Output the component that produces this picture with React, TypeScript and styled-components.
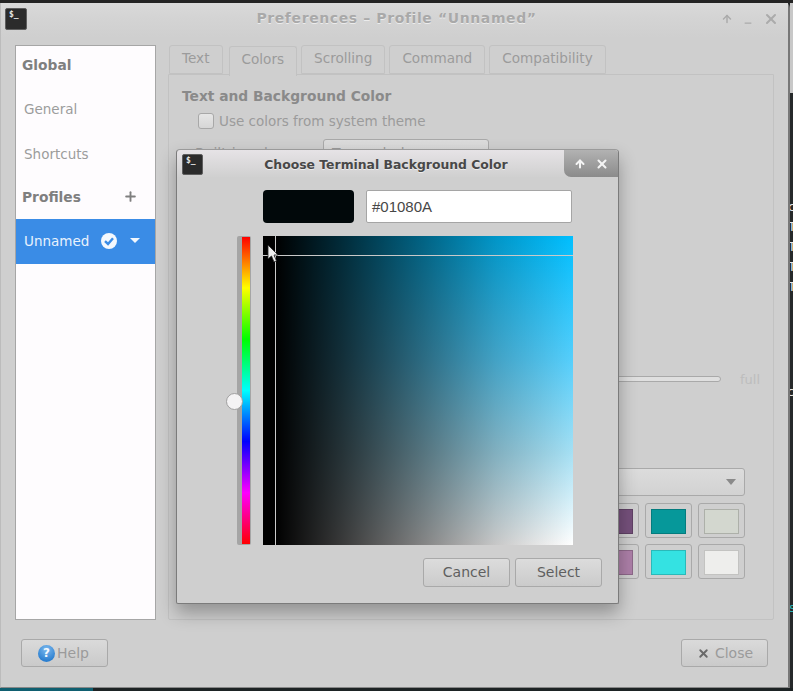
import React from "react";
import styled, { createGlobalStyle } from "styled-components";
import { LuArrowUp, LuMinus, LuPlus, LuX } from "react-icons/lu";

const GlobalStyle = createGlobalStyle`
  html, body {
    margin: 0;
    padding: 0;
    background: #26292a;
    overflow: hidden;
  }
  * {
    box-sizing: border-box;
  }
`;

const Page = styled.div`
  position: relative;
  width: 793px;
  height: 691px;
  display: flex;
  flex-direction: column;
  background: #26292a;
  font-family: "DejaVu Sans", sans-serif;
  font-size: 14px;
  overflow: hidden;
`;

const TopEdge = styled.div`
  height: 3px;
  flex: none;
  background: #242424;
`;

const Middle = styled.div`
  display: flex;
  height: 685px;
  flex: none;
`;

const BottomEdge = styled.div`
  height: 3px;
  flex: none;
  background: #1d2324;
`;

const TealBar = styled.div`
  width: 93px;
  height: 100%;
  background: #0f5f70;
`;

const BehindStrip = styled.div`
  flex: 1;
  display: flex;
  flex-direction: column;
  overflow: hidden;
  color: #e8e8e8;
  font-size: 13px;
  line-height: 20px;
`;

const BehindTop = styled.div`
  height: 90px;
  flex: none;
  background: #c8c8c8;
`;

const BehindLines = styled.div`
  margin-top: 104px;
  margin-left: -2px;
`;

const BehindLast = styled.div`
  margin-top: 85px;
  margin-left: -3px;
`;

const BehindTeal = styled.div`
  margin-top: 196px;
  margin-left: -1px;
  color: #2bb5b5;
`;

const Window = styled.div`
  width: 790px;
  flex: none;
  display: flex;
  flex-direction: column;
  background: #cfcfcf;
  border-right: 2px solid #777;
  border-bottom: 1px solid #888;
  border-left: 1px solid #bcbcbc;
  border-top-right-radius: 5px;
`;

const TitleBar = styled.div`
  position: relative;
  height: 35px;
  flex: none;
  display: flex;
  align-items: center;
  justify-content: space-between;
  padding: 0 9px 4px 4px;
  background: linear-gradient(#dadada, #d4d4d4 40%, #cfcfcf);
`;

const TermIcon = styled.div<{ $size: number }>`
  width: ${(p) => p.$size}px;
  height: ${(p) => p.$size}px;
  flex: none;
  padding: 1px 0 0 3px;
  background: #2b2b2b;
  border: 1px solid #5e5e5e;
  border-radius: 2px;
  color: #e6e6e6;
  font-family: "DejaVu Sans Mono", monospace;
  font-size: 8px;
  font-weight: bold;
  line-height: 10px;
`;

const TitleText = styled.div`
  position: absolute;
  left: 0;
  right: 0;
  top: 7px;
  text-align: center;
  padding-left: 4px;
  color: #a9a9a9;
  font-size: 14px;
  font-weight: bold;
  letter-spacing: 0.6px;
  text-shadow: 0 1px 0 #ececec;
`;

const WindowButtons = styled.div`
  display: flex;
  align-items: center;
  gap: 10px;
  color: #ababab;
  z-index: 1;
`;

const MinimizeMark = styled(LuMinus)`
  margin-top: 8px;
`;

const Body = styled.div`
  flex: 1;
  display: flex;
  gap: 12px;
  padding: 7px 14px 0 14px;
`;

const Sidebar = styled.div`
  width: 141px;
  height: 575px;
  flex: none;
  background: #fefcfe;
  border: 1px solid #a6a6a6;
`;

const SideRow = styled.div<{ $h: number }>`
  height: ${(p) => p.$h}px;
  display: flex;
  align-items: center;
  padding: 0 17px 0 8px;
  color: #9c9c9c;
  font-size: 13.5px;
`;

const SideHeading = styled(SideRow)`
  justify-content: space-between;
  padding-left: 6px;
  padding-bottom: 2px;
  color: #7f7f7f;
  font-size: 13.8px;
  font-weight: bold;
`;

const SideActive = styled(SideRow)`
  background: #3a8ce6;
  color: #e8f2fd;
  padding-right: 15px;
  padding-bottom: 2px;
`;

const ActiveName = styled.span`
  flex: 1;
`;

const CheckBadge = styled.svg`
  width: 16px;
  height: 16px;
  margin-right: 13px;
`;

const CaretDown = styled.span`
  width: 0;
  height: 0;
  border-left: 5px solid transparent;
  border-right: 5px solid transparent;
  border-top: 5px solid #f2f7fd;
`;

const Notebook = styled.div`
  flex: 1;
  display: flex;
  flex-direction: column;
  height: 575px;
`;

const TabRow = styled.div`
  height: 30px;
  flex: none;
  display: flex;
  gap: 4px;
  padding-left: 1px;
  position: relative;
  z-index: 1;
`;

const Tab = styled.div<{ $active?: boolean }>`
  height: ${(p) => (p.$active ? 30 : 29)}px;
  margin-top: ${(p) => (p.$active ? 1 : 0)}px;
  margin-left: ${(p) => (p.$active ? 2 : 0)}px;
  padding: 0 12px ${(p) => (p.$active ? "5px" : "4px")};
  display: flex;
  align-items: center;
  color: #9b9b9b;
  background: #cfcfcf;
  border: 1px solid #c2c2c2;
  border-bottom: ${(p) => (p.$active ? "0" : "1px solid #c2c2c2")};
  border-radius: 3px 3px 0 0;
  font-size: 13.6px;
`;

const Panel = styled.div`
  flex: 1;
  margin-top: -1px;
  display: flex;
  flex-direction: column;
  padding: 11px 13px 0 13px;
  border: 1px solid #c2c2c2;
  border-radius: 0 0 2px 2px;
`;

const SectionTitle = styled.div`
  height: 20px;
  line-height: 20px;
  color: #8a8a8a;
  font-size: 13.8px;
  font-weight: bold;
`;

const CheckRow = styled.div`
  margin-top: 7px;
  margin-left: 16px;
  height: 16px;
  display: flex;
  align-items: center;
  gap: 5px;
  color: #9b9b9b;
  font-size: 13.5px;
`;

const CheckBox = styled.span`
  width: 16px;
  height: 16px;
  background: linear-gradient(#e6e6e6, #d6d6d6);
  border: 1px solid #a8a8a8;
  border-radius: 3px;
`;

const SchemeRow = styled.div`
  margin-top: 10px;
  margin-left: 13px;
  display: flex;
  align-items: center;
  color: #9b9b9b;
`;

const SchemeLabel = styled.div`
  width: 128px;
`;

const Combo = styled.div<{ $w?: number }>`
  width: ${(p) => (p.$w ? `${p.$w}px` : "auto")};
  height: 28px;
  display: flex;
  align-items: center;
  justify-content: space-between;
  padding: 0 8px;
  color: #9b9b9b;
  background: linear-gradient(#dcdcdc, #d2d2d2);
  border: 1px solid #a9a9a9;
  border-radius: 3px;
`;

const ComboCaret = styled.span`
  width: 0;
  height: 0;
  border-left: 5px solid transparent;
  border-right: 5px solid transparent;
  border-top: 6px solid #8a8a8a;
`;

const SliderRow = styled.div`
  margin-top: 202px;
  height: 20px;
  display: flex;
  align-items: center;
  justify-content: flex-end;
  gap: 19px;
  color: #bdbdbd;
  font-size: 13px;
`;

const SliderTrack = styled.div`
  width: 300px;
  height: 6px;
  background: #dfdfdf;
  border: 1px solid #a9a9a9;
  border-radius: 3px;
`;

const PaletteBlock = styled.div`
  margin-top: 79px;
  margin-right: 15px;
  display: flex;
  flex-direction: column;
  gap: 7px;
  align-self: flex-end;
  width: 418px;
`;

const SwatchGrid = styled.div`
  display: grid;
  grid-template-columns: repeat(8, 47px);
  grid-auto-rows: 35px;
  gap: 6px;
`;

const Swatch = styled.div<{ $color: string }>`
  padding: 5px;
  background: #cfcfcf;
  border: 1px solid #a9a9a9;
  border-radius: 3px;

  &::after {
    content: "";
    display: block;
    height: 100%;
    background: ${(p) => p.$color};
    border: 1px solid rgba(0, 0, 0, 0.18);
  }
`;

const Footer = styled.div`
  height: 67px;
  flex: none;
  display: flex;
  align-items: flex-start;
  justify-content: space-between;
  padding: 19px 20px 0;
`;

const PushButton = styled.div<{ $h?: number }>`
  width: 87px;
  height: ${(p) => p.$h ?? 28}px;
  display: flex;
  align-items: center;
  justify-content: center;
  color: #9b9b9b;
  background: linear-gradient(#dadada, #cacaca);
  border: 1px solid #a9a9a9;
  border-radius: 3px;
  font-size: 14px;
`;

const HelpButton = styled(PushButton)`
  gap: 2px;
  padding-right: 2px;
`;

const HelpIcon = styled.span`
  width: 17px;
  height: 17px;
  display: flex;
  align-items: center;
  justify-content: center;
  border-radius: 50%;
  background: radial-gradient(circle at 50% 25%, #7cb9ee, #2b7fd0 75%);
  color: #f4f9fe;
  font-size: 12px;
  font-weight: bold;
`;

const CloseButton = styled(PushButton)`
  gap: 5px;
  padding-left: 1px;
`;

const Dialog = styled.div`
  position: absolute;
  left: 176px;
  top: 149px;
  width: 443px;
  height: 455px;
  display: flex;
  flex-direction: column;
  background: #cfcfcf;
  border: 1px solid #7b7b7b;
  border-top-color: #9a9a9a;
  border-radius: 4px 4px 2px 2px;
  box-shadow: 0 9px 18px rgba(0, 0, 0, 0.3);
`;

const DialogTitle = styled.div`
  position: relative;
  height: 27px;
  flex: none;
  display: flex;
  align-items: center;
  justify-content: space-between;
  padding-left: 5px;
  padding-top: 2px;
  background: linear-gradient(#e6e3e6, #d0d0d0);
  border-radius: 4px 4px 0 0;
`;

const DialogTitleText = styled.div`
  position: absolute;
  left: 0;
  right: 0;
  top: 7px;
  padding-left: 3px;
  padding-right: 26px;
  text-align: center;
  color: #484848;
  font-size: 12.4px;
  font-weight: bold;
  text-shadow: 0 1px 0 #ededed;
`;

const DialogButtons = styled.div`
  width: 54px;
  height: 27px;
  margin-top: -2px;
  display: flex;
  align-items: center;
  justify-content: center;
  gap: 9px;
  color: #f4f4f4;
  background: linear-gradient(#b2b2b2, #8b8b8b);
  border-radius: 0 3px 0 7px;
  z-index: 1;
`;

const ColorRow = styled.div`
  margin-top: 13px;
  margin-left: 86px;
  display: flex;
  gap: 12px;
`;

const ColorPreview = styled.div`
  width: 91px;
  height: 33px;
  background: #01080a;
  border-radius: 4px;
`;

const HexEntry = styled.div`
  width: 206px;
  height: 33px;
  display: flex;
  align-items: center;
  padding-left: 5px;
  background: #fff;
  border: 1px solid #a5a5a5;
  border-radius: 2px;
  color: #474747;
  font-family: "Liberation Sans", sans-serif;
  font-size: 15px;
`;

const PickerRow = styled.div`
  margin-top: 13px;
  margin-left: 60px;
  display: flex;
  gap: 12px;
`;

const HueTrough = styled.div`
  position: relative;
  width: 14px;
  height: 309px;
  padding: 1px 1px 1px 5px;
  background: #a5a5a5;
  border-radius: 2px;
`;

const HueStrip = styled.div`
  height: 100%;
  background: linear-gradient(
    #ff0000,
    #ffff00 16.6%,
    #00ff00 33.3%,
    #00ffff 50%,
    #0000ff 66.6%,
    #ff00ff 83.3%,
    #ff0000
  );
`;

const HueKnob = styled.div`
  position: absolute;
  left: -11px;
  top: 157px;
  width: 17px;
  height: 17px;
  border-radius: 50%;
  background: #f4f3f4;
  border: 1px solid #a0a0a0;
`;

const SvSquare = styled.div`
  position: relative;
  width: 310px;
  height: 309px;
  background: linear-gradient(
      to right,
      #000,
      #000 4%,
      rgba(0, 0, 0, 0.78) 25%,
      rgba(0, 0, 0, 0.5) 50%,
      rgba(0, 0, 0, 0.22) 75%,
      rgba(0, 0, 0, 0)
    ),
    linear-gradient(#00bfff, #55cffc 40%, #a5e0f4 70%, #fff);
`;

const CrossV = styled.div`
  position: absolute;
  left: 12px;
  top: 0;
  bottom: 0;
  width: 1px;
  background: #c9c9c9;
`;

const CrossH = styled.div`
  position: absolute;
  left: 0;
  right: 0;
  top: 19px;
  height: 1px;
  background: #c9c9c9;
`;

const Pointer = styled.svg`
  position: absolute;
  left: 4px;
  top: 8px;
  width: 12px;
  height: 19px;
`;

const DialogActions = styled.div`
  margin-top: 13px;
  margin-right: 16px;
  display: flex;
  justify-content: flex-end;
  gap: 5px;
`;

const DialogButton = styled(PushButton)`
  padding-bottom: 2px;
  color: #5f5f5f;
  background: linear-gradient(#dcdcdc, #cbcbcb);
`;

const PALETTE = [
  "#2e3436", "#cc0000", "#4e9a06", "#c4a000", "#3465a4", "#75507b", "#06989a", "#d3d7cf",
  "#555753", "#ef2929", "#8ae234", "#fce94f", "#729fcf", "#ad7fa8", "#34e2e2", "#eeeeec",
];

const TABS = ["Text", "Colors", "Scrolling", "Command", "Compatibility"];

export default function App() {
  return (
    <Page>
      <GlobalStyle />
      <TopEdge />
      <Middle>
        <Window>
          <TitleBar>
            <TermIcon $size={22}>$_</TermIcon>
            <TitleText>Preferences – Profile “Unnamed”</TitleText>
            <WindowButtons>
              <LuArrowUp size={12} strokeWidth={3} />
              <MinimizeMark size={10} strokeWidth={3} />
              <LuX size={16} strokeWidth={3} />
            </WindowButtons>
          </TitleBar>
          <Body>
            <Sidebar>
              <SideHeading $h={40}>Global</SideHeading>
              <SideRow $h={45}>General</SideRow>
              <SideRow $h={45}>Shortcuts</SideRow>
              <SideHeading $h={43}>
                Profiles
                <LuPlus size={15} strokeWidth={3} />
              </SideHeading>
              <SideActive $h={45}>
                <ActiveName>Unnamed</ActiveName>
                <CheckBadge viewBox="0 0 16 16">
                  <circle cx="8" cy="8" r="8" fill="#f4f8fd" />
                  <path d="M4 8.2 7 11 12 5.2" fill="none" stroke="#3a8ce6" strokeWidth="2.4" />
                </CheckBadge>
                <CaretDown />
              </SideActive>
            </Sidebar>
            <Notebook>
              <TabRow>
                {TABS.map((t) => (
                  <Tab key={t} $active={t === "Colors"}>
                    {t}
                  </Tab>
                ))}
              </TabRow>
              <Panel>
                <SectionTitle>Text and Background Color</SectionTitle>
                <CheckRow>
                  <CheckBox />
                  Use colors from system theme
                </CheckRow>
                <SchemeRow>
                  <SchemeLabel>Built-in schemes:</SchemeLabel>
                  <Combo $w={166}>
                    Tango dark
                    <ComboCaret />
                  </Combo>
                </SchemeRow>
                <SliderRow>
                  <SliderTrack />
                  full
                </SliderRow>
                <PaletteBlock>
                  <Combo>
                    Tango
                    <ComboCaret />
                  </Combo>
                  <SwatchGrid>
                    {PALETTE.map((c) => (
                      <Swatch key={c} $color={c} />
                    ))}
                  </SwatchGrid>
                </PaletteBlock>
              </Panel>
            </Notebook>
          </Body>
          <Footer>
            <HelpButton>
              <HelpIcon>?</HelpIcon>
              Help
            </HelpButton>
            <CloseButton>
              <LuX size={13} strokeWidth={3.5} color="#6a6a6a" />
              Close
            </CloseButton>
          </Footer>
        </Window>
        <BehindStrip>
          <BehindTop />
          <BehindLines>
            c<br />T<br />T<br />T<br />T
          </BehindLines>
          <BehindLast>c</BehindLast>
          <BehindTeal>s</BehindTeal>
        </BehindStrip>
      </Middle>
      <BottomEdge>
        <TealBar />
      </BottomEdge>
      <Dialog>
        <DialogTitle>
          <TermIcon $size={21}>$_</TermIcon>
          <DialogTitleText>Choose Terminal Background Color</DialogTitleText>
          <DialogButtons>
            <LuArrowUp size={12} strokeWidth={4} />
            <LuX size={14} strokeWidth={3.5} />
          </DialogButtons>
        </DialogTitle>
        <ColorRow>
          <ColorPreview />
          <HexEntry>#01080A</HexEntry>
        </ColorRow>
        <PickerRow>
          <HueTrough>
            <HueStrip />
            <HueKnob />
          </HueTrough>
          <SvSquare>
            <CrossV />
            <CrossH />
            <Pointer viewBox="0 0 12 19">
              <path
                d="M1 1 L1 15 L4.5 12 L7 18 L9.5 17 L7 11 L11 11 Z"
                fill="#efefef"
                stroke="#222"
                strokeWidth="0.8"
              />
            </Pointer>
          </SvSquare>
        </PickerRow>
        <DialogActions>
          <DialogButton $h={29}>Cancel</DialogButton>
          <DialogButton $h={29}>Select</DialogButton>
        </DialogActions>
      </Dialog>
    </Page>
  );
}
